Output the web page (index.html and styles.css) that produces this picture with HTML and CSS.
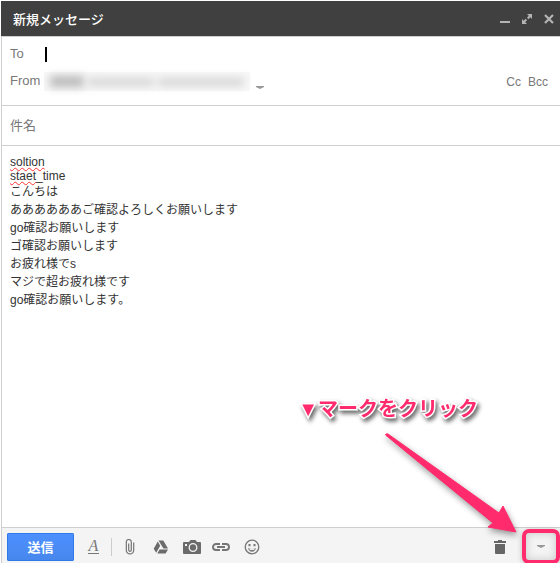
FILE: index.html
```html
<!DOCTYPE html>
<html lang="ja">
<head>
<meta charset="utf-8">
<meta name="viewport" content="width=device-width, initial-scale=1">
<title>新規メッセージ</title>
<link rel="stylesheet" href="styles.css">
</head>
<body>
<main class="compose">
  <header class="titlebar">
    <h1 class="title">新規メッセージ</h1>
    <button class="win-btn" type="button" aria-label="最小化"><svg width="12" height="12" viewBox="0 0 12 12"><path d="M1 8h10v2H1z" fill="#b4b4b4"/></svg></button>
    <button class="win-btn" type="button" aria-label="全画面表示"><svg width="12" height="12" viewBox="0 0 12 12"><path d="M6 1h5v5L9.300 4.300 7.400 6.200 6 4.800 7.800 2.800zM1 11V6l1.700 1.700L4.600 5.800 6 7.200 4.200 9.200 6 11z" fill="#b4b4b4"/></svg></button>
    <button class="win-btn" type="button" aria-label="閉じる"><svg width="12" height="12" viewBox="0 0 12 12"><path d="M2 2l8 8M10 2l-8 8" stroke="#b4b4b4" stroke-width="2.200" fill="none"/></svg></button>
  </header>

  <section class="recipients">
    <div class="row">
      <label class="label" for="to">To</label>
      <span class="caret"></span>
      <input class="field" id="to" type="text">
    </div>
    <div class="row">
      <span class="label">From</span>
      <span class="masked"><i class="smudge name"></i><i class="smudge address"></i><i class="smudge domain"></i></span>
      <button class="from-toggle" type="button" aria-label="差出人を選択"><svg width="8" height="4" viewBox="0 0 8 4"><path d="M0 0h8v1L4 3 0 1z" fill="#999"/></svg></button>
      <button class="copy first" type="button">Cc</button>
      <button class="copy" type="button">Bcc</button>
    </div>
  </section>

  <input class="subject" type="text" placeholder="件名" aria-label="件名">

  <div class="message" role="textbox" aria-multiline="true" aria-label="メッセージ本文" tabindex="0">
    <p class="latin"><span class="typo">soltion</span></p>
    <p class="latin"><span class="typo">staet</span>_time</p>
    <p>こんちは</p>
    <p>ああああああご確認よろしくお願いします</p>
    <p>go確認お願いします</p>
    <p>ゴ確認お願いします</p>
    <p>お疲れ様でs</p>
    <p>マジで超お疲れ様です</p>
    <p>go確認お願いします。</p>
  </div>

  <footer class="toolbar">
    <button class="send" type="button">送信</button>
    <button class="tool format" type="button" aria-label="書式設定オプション">A</button>
    <span class="divider"></span>
    <button class="tool clip" type="button" aria-label="ファイルを添付"><svg width="10" height="16" viewBox="0 0 10 16"><path d="M8.700 3.500v7.700a3.700 3.700 0 0 1-7.400 0V3a2.300 2.300 0 0 1 5 0v8a1.300 1.300 0 0 1-2.600 0V4.500" fill="none" stroke="#757575" stroke-width="1.200"/></svg></button>
    <button class="tool drive" type="button" aria-label="ドライブを使用してファイルを挿入"><svg width="16" height="14" viewBox="0 0 16 14"><path d="M5.500.5h4.800L15 8.500h-4.600zM4.800 1.500l2.400 4.200-4 7L.7 8.700zM6.600 9.500H15l-2.400 4H4.300z" fill="#6b6b6b"/></svg></button>
    <button class="tool photo" type="button" aria-label="写真を挿入"><svg width="18" height="14" viewBox="0 0 18 14"><path d="M1 2h5l1.500-2h5L14 2h3q1 0 1 1v10q0 1-1 1H1q-1 0-1-1V3q0-1 1-1z" fill="#6b6b6b"/><circle cx="10" cy="7.500" r="3.800" fill="none" stroke="#f4f4f4" stroke-width="1.300"/><path d="M2 4h2v2H2z" fill="#f4f4f4"/></svg></button>
    <button class="tool link" type="button" aria-label="リンクを挿入"><svg width="18" height="8" viewBox="0 0 18 8"><path d="M8 1H4a3 3 0 0 0 0 6h4M10 1h4a3 3 0 0 1 0 6h-4M5 4h8" fill="none" stroke="#757575" stroke-width="1.900"/></svg></button>
    <button class="tool emoji" type="button" aria-label="絵文字を挿入"><svg width="16" height="16" viewBox="0 0 16 16"><circle cx="8" cy="8" r="6.800" fill="none" stroke="#757575" stroke-width="1.300"/><path d="M4.500 5h2v2.200h-2zM9.500 5h2v2.200h-2z" fill="#757575"/><path d="M4 9q4 2 8 0-1 3.800-4 3.800T4 9z" fill="#757575"/><path d="M5.500 10.300q2.500.8 5 0" stroke="#f4f4f4" fill="none"/></svg></button>
    <button class="tool trash" type="button" aria-label="下書きを破棄"><svg width="12" height="14" viewBox="0 0 12 14"><path d="M0 1h4V0h4v1h4v2H0zM1 4h10v9q0 1-1 1H2q-1 0-1-1z" fill="#666"/></svg></button>
    <span class="more-wrap">
      <button class="more" type="button" aria-label="その他のオプション"><svg width="8" height="4" viewBox="0 0 8 4"><path d="M0 0h8v1L4 3 0 1z" fill="#999"/></svg></button>
      <span class="callout">▼マークをクリック</span>
      <svg class="arrow" width="136" height="106" viewBox="0 0 136 106"><path d="M1.500 2Q2 0 4 1L115 80l4-7 13 26-28-5 5-4Z" fill="#ff2b6d" stroke="#ff2b6d"/></svg>
    </span>
  </footer>
</main>
</body>
</html>
```
FILE: styles.css
```css
* {
  box-sizing: border-box;
}

body {
  margin: 0;
  background: #fff;
  color: #333;
  font-family: "Liberation Sans", "Noto Sans CJK JP", sans-serif;
  font-size: 12px;
}

button,
input {
  margin: 0;
  padding: 0;
  border: 0;
  background: none;
  color: inherit;
  font: inherit;
}

button {
  display: flex;
  align-items: center;
  justify-content: center;
}

svg {
  display: block;
}

.compose {
  display: flex;
  flex-direction: column;
  min-height: 100vh;
  padding: 1px 0 0 1px;
  overflow: hidden;
}

.titlebar {
  display: flex;
  align-items: center;
  gap: 10px;
  height: 35px;
  padding: 0 5px 0 12px;
  background: #404040;
}

.title {
  flex: 1;
  margin: 0;
  padding-top: 3px;
  color: #fff;
  font-size: 13px;
  font-weight: 500;
  line-height: 20px;
}

.win-btn {
  width: 12px;
  height: 12px;
}

.recipients {
  padding: 4px 12px 10px 8px;
  border: solid #cfcfcf;
  border-width: 1px 0 1px 1px;
  color: #777;
}

.row {
  display: flex;
  align-items: center;
  height: 27px;
}

.label {
  width: 34px;
  font-size: 13px;
  line-height: 17px;
  padding-bottom: 2px;
}

.caret {
  width: 2px;
  height: 15px;
  margin-left: 1px;
  background: #000;
}

.field {
  flex: 1;
  min-width: 0;
  height: 24px;
  outline: 0;
}

.masked {
  display: flex;
  align-items: center;
  gap: 4px;
  width: 206px;
  height: 19px;
  padding: 0 6px;
  background: #f8f8f8;
}

.smudge {
  height: 8px;
  background: #d4d4d4;
  filter: blur(4px);
}

.name {
  width: 34px;
  height: 11px;
  background: #b8b8b8;
}

.address {
  width: 66px;
}

.domain {
  flex: 1;
}

.from-toggle {
  width: 8px;
  height: 16px;
  margin: 0 auto 0 6px;
  align-items: flex-end;
}

.first {
  margin-right: 7px;
}

.subject {
  height: 40px;
  padding: 0 8px;
  border: solid #cfcfcf;
  border-width: 0 0 1px 1px;
  outline: 0;
  font-size: 13px;
}

.subject::placeholder {
  color: #777;
  opacity: 1;
}

.message {
  flex: 1;
  padding: 9px 8px;
  border-left: 1px solid #cfcfcf;
  outline: 0;
}

.message p {
  margin: 0;
  line-height: 18px;
}

.message .latin {
  line-height: 14px;
}

.typo {
  text-decoration: underline wavy #f33 1px;
  text-decoration-skip-ink: none;
  text-underline-offset: 1px;
}

.toolbar {
  display: flex;
  align-items: center;
  height: 36px;
  padding: 2px 0 0 5px;
  border: solid #cfcfcf;
  border-width: 1px 0 0 1px;
  background: #f4f4f4;
}

.send {
  width: 67px;
  height: 28px;
  margin-right: 10px;
  border: 1px solid #3079ed;
  border-radius: 1px;
  background: linear-gradient(#4d90fe, #4787ed);
  color: #fff;
  font-size: 13px;
  font-weight: 700;
}

.tool {
  width: 18px;
  height: 20px;
  flex: none;
}

.format {
  border-bottom: 1px solid #777;
  color: #777;
  width: 11px;
  height: 14px;
  margin: 0 12px 0 4px;
  font-family: "Liberation Serif", serif;
  font-size: 16px;
  font-style: italic;
  line-height: 12px;
}

.divider {
  width: 1px;
  height: 18px;
  background: #ccc;
}

.clip {
  margin-left: 9px;
}

.drive,
.photo,
.emoji {
  margin-left: 13px;
}

.link {
  margin-left: 11px;
}

.trash {
  margin: 0 13px 0 auto;
}

.more-wrap {
  position: relative;
  flex: none;
}

.more {
  width: 38px;
  height: 35px;
  border: 4px solid #ff2b6d;
  border-radius: 7px;
  box-shadow: 0 1px 5px #8888, inset 0 0 9px #8886;
}

.callout {
  position: absolute;
  right: 82px;
  bottom: 141px;
  color: #ff2b6d;
  font-size: 20px;
  font-weight: 700;
  line-height: 28px;
  white-space: nowrap;
  paint-order: stroke fill;
  -webkit-text-stroke: 3px #fff;
  filter: drop-shadow(2px 3px 2px #0009);
}

.arrow {
  position: absolute;
  right: 40px;
  bottom: 25px;
  filter: drop-shadow(1px 3px 3px #0006);
  pointer-events: none;
}
```
